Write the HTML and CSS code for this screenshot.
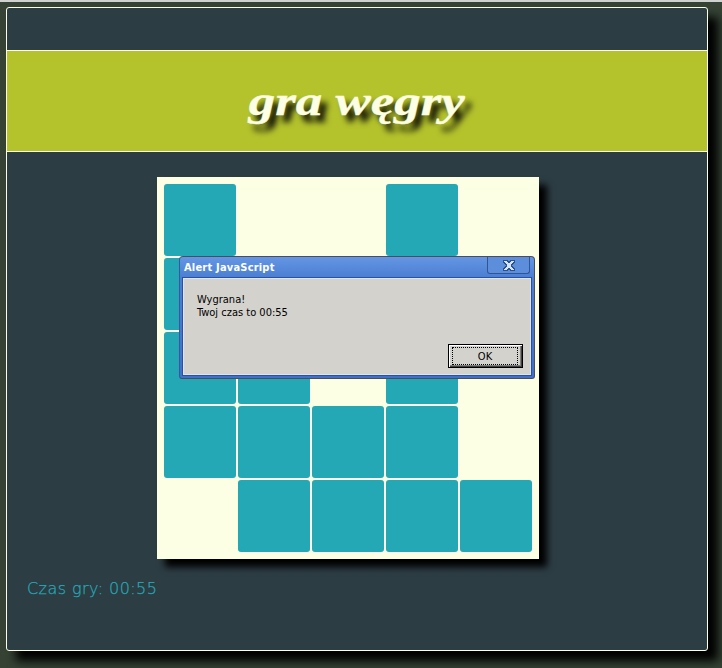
FILE: index.html
```
<!DOCTYPE html>
<html lang="pl">
<head>
<meta charset="utf-8">
<title>gra węgry</title>
<link rel="stylesheet" href="styles.css">
</head>
<body>
<main class="panel">
  <header class="banner"><h1 class="title">gra węgry</h1></header>
  <section class="board">
    <i class="tile"></i><i></i><i></i><i class="tile"></i><i></i>
    <i class="tile"></i><i></i><i></i><i></i><i></i>
    <i class="tile"></i><i class="tile"></i><i></i><i class="tile"></i><i></i>
    <i class="tile"></i><i class="tile"></i><i class="tile"></i><i class="tile"></i><i></i>
    <i></i><i class="tile"></i><i class="tile"></i><i class="tile"></i><i class="tile"></i>
  </section>
  <p class="timer">Czas gry: 00:55</p>
</main>
<div class="dialog" role="alertdialog">
  <div class="dialog-bar">
    <span class="dialog-title">Alert JavaScript</span>
    <button class="close" aria-label="Zamknij"><svg width="12" height="11" viewBox="0 0 12 11" shape-rendering="crispEdges"><path class="x-edge" d="M0 0h5v1h2V0h5v3h-1v1h-1v1H9v1h1v1h1v1h1v3H7v-1H5v1H0V8h1V7h1V6h1V5H2V4H1V3H0z"/><path class="x-fill" d="M1 1h3v1h1v1h2V2h1V1h3v1h-1v1H9v1H8v3h1v1h1v1h1v1H8V9H7V8H5v1H4v1H1V9h1V8h1V7h1V4H3V3H2V2H1z"/></svg></button>
  </div>
  <div class="dialog-body">
    <p class="message">Wygrana!<br>Twoj czas to 00:55</p>
    <button class="ok"><span class="focus">OK</span></button>
  </div>
</div>
</body>
</html>
```
FILE: styles.css
```
* { box-sizing: border-box; }
html { height: 668px; overflow: hidden; }
body {
  height: 668px;
  margin: 0;
  padding: 5px 6px 0;
  overflow: hidden;
  border-top: 2px solid #d0d2d0;
  background: #354234;
}
.panel {
  width: 702px;
  height: 644px;
  padding-top: 42px;
  border: 1px solid #fcffe3;
  border-radius: 3px;
  background: #2d3d44;
  box-shadow: 10px 10px 10px #000;
}
.banner {
  display: flex;
  justify-content: center;
  height: 102px;
  border-top: 1px solid #fcffe3;
  border-bottom: 1px solid #fcffe3;
  background: #b4c32c;
}
.title {
  margin: 0;
  font: italic bold 42px/100px "Liberation Serif", serif;
  color: #fcffe3;
  -webkit-text-stroke: .4px #fcffe3;
  text-shadow: 5px 7px 6px #000;
  transform: scaleX(1.26);
}
.board {
  display: grid;
  grid-template: repeat(5, 72px) / repeat(5, 72px);
  gap: 2px;
  width: 382px;
  height: 382px;
  margin: 25px 0 0 150px;
  padding: 7px;
  background: #fcffe3;
  box-shadow: 8px 8px 7px #000;
}
.tile { border-radius: 3px; background: #25a8b6; }
.timer {
  margin: 18px 0 0 20px;
  font: 200 16px/24px "DejaVu Sans", sans-serif;
  letter-spacing: .43px;
  color: #25a8b6;
  -webkit-text-stroke: .25px #25a8b6;
}
.dialog {
  position: absolute;
  left: 179px;
  top: 256px;
  display: flex;
  flex-direction: column;
  width: 356px;
  height: 123px;
  padding: 0 3px 3px 3px;
  border: 1px solid #4d4c59;
  border-left-color: #35599f;
  border-radius: 4px 4px 3px 3px;
  background: linear-gradient(#6496e4, #4b7fd2 20px, #416fc9);
  font: 11px/13px "DejaVu Sans Condensed", "DejaVu Sans", sans-serif;
  color: #000;
}
.dialog-bar {
  display: flex;
  justify-content: space-between;
  height: 21px;
}
.dialog-title {
  padding: 4px 0 0 1px;
  font-weight: bold;
  letter-spacing: .2px;
  color: #fff;
  white-space: nowrap;
}
.close {
  display: flex;
  justify-content: center;
  width: 43px;
  height: 17px;
  margin-right: 1px;
  padding: 3px 0 0;
  border: 1px solid #315497;
  border-top: 0;
  border-radius: 0 0 3px 3px;
  background: #5c8edc;
}
.x-edge { fill: #2c4f8e; }
.x-fill { fill: #d2e4fa; }
.dialog-body {
  display: flex;
  flex: 1;
  justify-content: space-between;
  border: 1px solid #dce5f5;
  outline: 1px solid #2e519f;
  background: #d4d2cc;
}
.message { margin: 14px 0 0 13px; white-space: nowrap; }
.ok {
  align-self: flex-end;
  width: 75px;
  height: 24px;
  margin: 0 7px 6px 0;
  padding: 1px;
  border: 1px solid #000;
  background: #d4d2cc;
  box-shadow: inset 1px 1px #fff, inset -1px -1px #404040, inset -2px -2px #808080;
  font: inherit;
  color: #000;
}
.focus {
  display: block;
  height: 18px;
  margin: 0 3px 0 2px;
  border: 1px dotted #000;
  line-height: 17px;
}
```
